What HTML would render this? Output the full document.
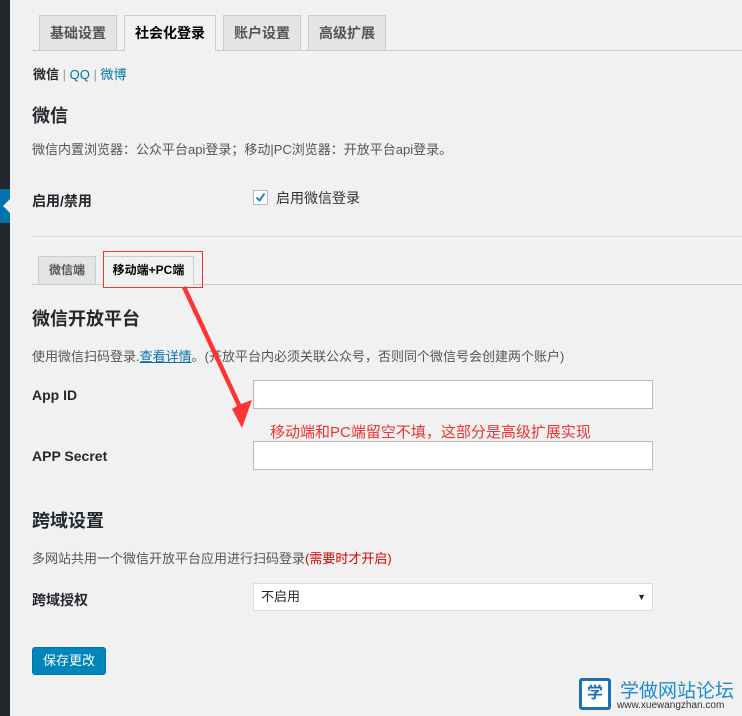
<!DOCTYPE html>
<html><head><meta charset="utf-8"><style>
*{box-sizing:border-box;margin:0;padding:0}
body{width:742px;height:716px;background:#f1f1f1;position:relative;overflow:hidden;font-family:"Liberation Sans","Noto Sans CJK SC",sans-serif;color:#23282d;font-size:13px}
.a{position:absolute;white-space:nowrap}
.tab{position:absolute;top:15px;height:35px;border:1px solid #ccc;border-bottom:none;background:#e4e4e4;font-size:14px;font-weight:bold;color:#555;text-align:center;line-height:34px}
.tab.on{background:#f1f1f1;color:#000;height:36px}
.t2{position:absolute;top:256px;height:28px;border:1px solid #ccc;border-bottom:none;background:#e4e4e4;font-size:12px;font-weight:bold;color:#555;text-align:center;line-height:27px}
.inp{position:absolute;left:253px;width:400px;height:29px;background:#fff;border:1px solid #bbb}
</style></head><body>
<div class="a" style="left:0;top:0;width:10px;height:716px;background:#23282d"></div>
<div class="a" style="left:0;top:189px;width:10px;height:34px;background:#0073aa"></div>
<div class="a" style="left:3px;top:199px;width:0;height:0;border-top:7px solid transparent;border-bottom:7px solid transparent;border-right:7px solid #f1f1f1"></div>

<div class="a" style="left:32px;top:50px;width:710px;height:1px;background:#ccc"></div>
<div class="tab" style="left:39px;width:78px">基础设置</div>
<div class="tab on" style="left:124px;width:92px">社会化登录</div>
<div class="tab" style="left:223px;width:78px">账户设置</div>
<div class="tab" style="left:308px;width:78px">高级扩展</div>

<div class="a" style="left:33px;top:64px;font-size:13px"><b>微信</b> <span style="color:#999">|</span> <span style="color:#0073aa">QQ</span> <span style="color:#999">|</span> <span style="color:#0073aa">微博</span></div>
<div class="a" style="left:32px;top:102px;font-size:18px;font-weight:bold">微信</div>
<div class="a" style="left:32px;top:139px;color:#555">微信内置浏览器：公众平台api登录；移动|PC浏览器：开放平台api登录。</div>
<div class="a" style="left:32px;top:191px;font-weight:bold;font-size:14px">启用/禁用</div>
<div class="a" style="left:253px;top:190px;width:15px;height:15px;border:1px solid #b4b9be;background:#fff"><svg width="13" height="13" style="position:absolute;left:0;top:0"><path d="M2.5 6.5 L5.5 9.5 L10.5 2.5" stroke="#1e8cbe" stroke-width="2" fill="none"/></svg></div>
<div class="a" style="left:276px;top:188px;font-size:14px;color:#333">启用微信登录</div>
<div class="a" style="left:32px;top:236px;width:710px;height:1px;background:#ddd"></div>

<div class="a" style="left:32px;top:284px;width:710px;height:1px;background:#ccc"></div>
<div class="t2" style="left:38px;width:58px">微信端</div>
<div class="t2" style="left:103px;width:91px;background:#f1f1f1;color:#000;height:29px">移动端+PC端</div>
<div class="a" style="left:103px;top:251px;width:100px;height:37px;border:1px solid #e33"></div>

<div class="a" style="left:32px;top:305px;font-size:18px;font-weight:bold">微信开放平台</div>
<div class="a" style="left:32px;top:346px;color:#555">使用微信扫码登录.<span style="color:#0073aa;text-decoration:underline">查看详情</span>。(开放平台内必须关联公众号，否则同个微信号会创建两个账户)</div>
<div class="a" style="left:32px;top:387px;font-weight:bold;font-size:14px">App ID</div>
<div class="inp" style="top:380px"></div>
<div class="a" style="left:32px;top:448px;font-weight:bold;font-size:14px">APP Secret</div>
<div class="inp" style="top:441px"></div>
<div class="a" style="left:270px;top:421px;font-size:15px;color:#e33">移动端和PC端留空不填，这部分是高级扩展实现</div>
<svg class="a" style="left:0;top:0" width="742" height="716"><polygon points="182,288 186,286 241,404 252,400 242,428 232,409 237,406" fill="#f33"/></svg>

<div class="a" style="left:32px;top:507px;font-size:18px;font-weight:bold">跨域设置</div>
<div class="a" style="left:32px;top:548px;color:#555">多网站共用一个微信开放平台应用进行扫码登录<span style="color:#d00">(需要时才开启)</span></div>
<div class="a" style="left:32px;top:590px;font-weight:bold;font-size:14px">跨域授权</div>
<div class="a" style="left:253px;top:583px;width:400px;height:28px;background:#fff;border:1px solid #ddd;padding-left:7px;line-height:26px;font-size:13px">不启用<span style="position:absolute;right:6px;font-size:9px">▼</span></div>
<div class="a" style="left:32px;top:647px;width:74px;height:28px;background:#0085ba;border:1px solid #0073aa;border-radius:3px;color:#fff;line-height:26px;text-align:center;font-size:13px">保存更改</div>

<div class="a" style="left:579px;top:678px;width:32px;height:32px;border:3px solid #1e6fb5;border-radius:3px;background:#fff;color:#1e6fb5;font-size:16px;text-align:center;line-height:26px;font-weight:bold">学</div>
<div class="a" style="left:620px;top:676px;font-size:19px;color:#1e8cd0">学做网站论坛</div>
<div class="a" style="left:617px;top:700px;font-size:10px;color:#333">www.xuewangzhan.com</div>
</body></html>
